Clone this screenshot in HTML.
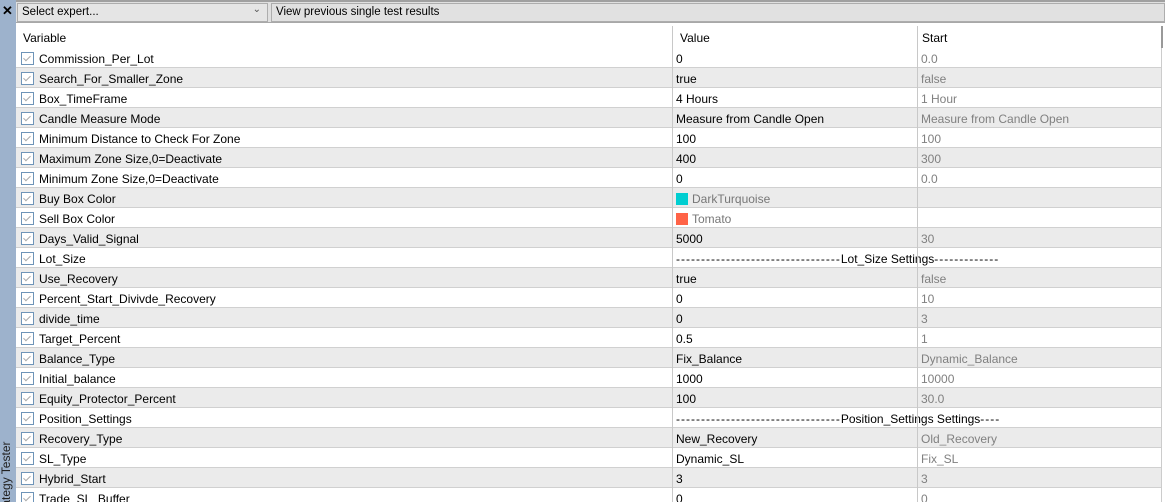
<!DOCTYPE html><html><head><style>
*{margin:0;padding:0;box-sizing:border-box}
html,body{width:1165px;height:502px;overflow:hidden}
body{background:#fff;font-family:"Liberation Sans",sans-serif;font-size:12px;color:#000;position:relative}
.side{position:absolute;left:0;top:0;width:16px;height:502px;background:#9db2cc;overflow:hidden}
.top{position:absolute;left:16px;top:0;width:1149px;height:23px;background:#e0e0e0;border-top:2px solid #a0a0a0;border-bottom:1px solid #a8a8a8}
.dd{position:absolute;left:17px;top:3px;width:251px;height:19px;background:#e5e5e5;border:1px solid #adadad;padding:2px 4px;font-size:11.5px}
.btn{position:absolute;left:271px;top:3px;width:894px;height:19px;background:#e1e1e1;border:1px solid #adadad;padding:2px 4px;font-size:11.5px}
#rows{position:absolute;left:0;top:0;width:1165px;height:502px;overflow:hidden}
.row{position:absolute;left:16px;width:1146px;height:20px;border-bottom:1px solid #d0d0d0}
.row div{position:absolute;top:4px;white-space:nowrap}
.g{background:#ebebeb}
.c1{left:23px}.c2{left:660px}.c3{left:905px;color:#808080}
.ds{letter-spacing:1px}
.cb{position:absolute;left:5px!important;top:4px!important;width:13px;height:13px;border:1px solid #6e94b8;background:#fff}
.cb:after{content:"";position:absolute;left:3px;top:1px;width:3px;height:6px;border:solid #aaa;border-width:0 1.5px 1.5px 0;transform:rotate(45deg)}
.vl{position:absolute;top:26px;height:476px;width:1px;background:#c8c8c8}
.sw{display:inline-block;width:12px;height:12px;vertical-align:-2px;margin-right:4px}
</style></head><body>
<div class="side"><div style="position:absolute;left:2px;top:3px;font-size:13px;font-weight:bold">✕</div>
<div style="position:absolute;left:-44px;top:465px;width:100px;transform:rotate(-90deg);font-size:12px;color:#222;white-space:nowrap">Strategy Tester</div></div>
<div class="top"></div>
<div class="dd">Select expert...<span style="position:absolute;right:6px;top:0px;font-size:10px;color:#555">&#8964;</span></div>
<div class="btn">View previous single test results</div>
<div id="rows"></div>
<script>
var d=[["Commission_Per_Lot","0","0.0"],["Search_For_Smaller_Zone","true","false"],["Box_TimeFrame","4 Hours","1 Hour"],["Candle Measure Mode","Measure from Candle Open","Measure from Candle Open"],["Minimum Distance to Check For Zone","100","100"],["Maximum Zone Size,0=Deactivate","400","300"],["Minimum Zone Size,0=Deactivate","0","0.0"],["Buy Box Color","<span class='sw' style='background:#00ced1'></span><span style='color:#777'>DarkTurquoise</span>",""],["Sell Box Color","<span class='sw' style='background:#ff6347'></span><span style='color:#777'>Tomato</span>",""],["Days_Valid_Signal","5000","30"],["Lot_Size","<span class='ds'>---------------------------------</span>Lot_Size Settings<span class='ds'>-------------</span>","",1],["Use_Recovery","true","false"],["Percent_Start_Divivde_Recovery","0","10"],["divide_time","0","3"],["Target_Percent","0.5","1"],["Balance_Type","Fix_Balance","Dynamic_Balance"],["Initial_balance","1000","10000"],["Equity_Protector_Percent","100","30.0"],["Position_Settings","<span class='ds'>---------------------------------</span>Position_Settings Settings<span class='ds'>----</span>","",1],["Recovery_Type","New_Recovery","Old_Recovery"],["SL_Type","Dynamic_SL","Fix_SL"],["Hybrid_Start","3","3"],["Trade_SL_Buffer","0","0"]];
var h='<div class="row" style="top:26px;height:22px;border:none"><div style="left:7px;top:5px">Variable</div><div style="left:664px;top:5px">Value</div><div style="left:906px;top:5px">Start</div></div>';
d.forEach(function(r,i){h+='<div class="row'+(i%2?' g':'')+'" style="top:'+(48+i*20)+'px"><span class="cb"></span><div class="c1">'+r[0]+'</div><div class="c2">'+r[1]+'</div>'+(r[3]?'':'<div class="c3">'+r[2]+'</div>')+'</div>';});
h+='<div class="vl" style="left:672px"></div><div class="vl" style="left:917px"></div>';
h+='<div style="position:absolute;left:1161px;top:26px;width:1px;height:476px;background:#ccc"></div><div style="position:absolute;left:1161px;top:26px;width:2px;height:22px;background:#999"></div>';
document.getElementById("rows").innerHTML=h;
</script>
</body></html>
